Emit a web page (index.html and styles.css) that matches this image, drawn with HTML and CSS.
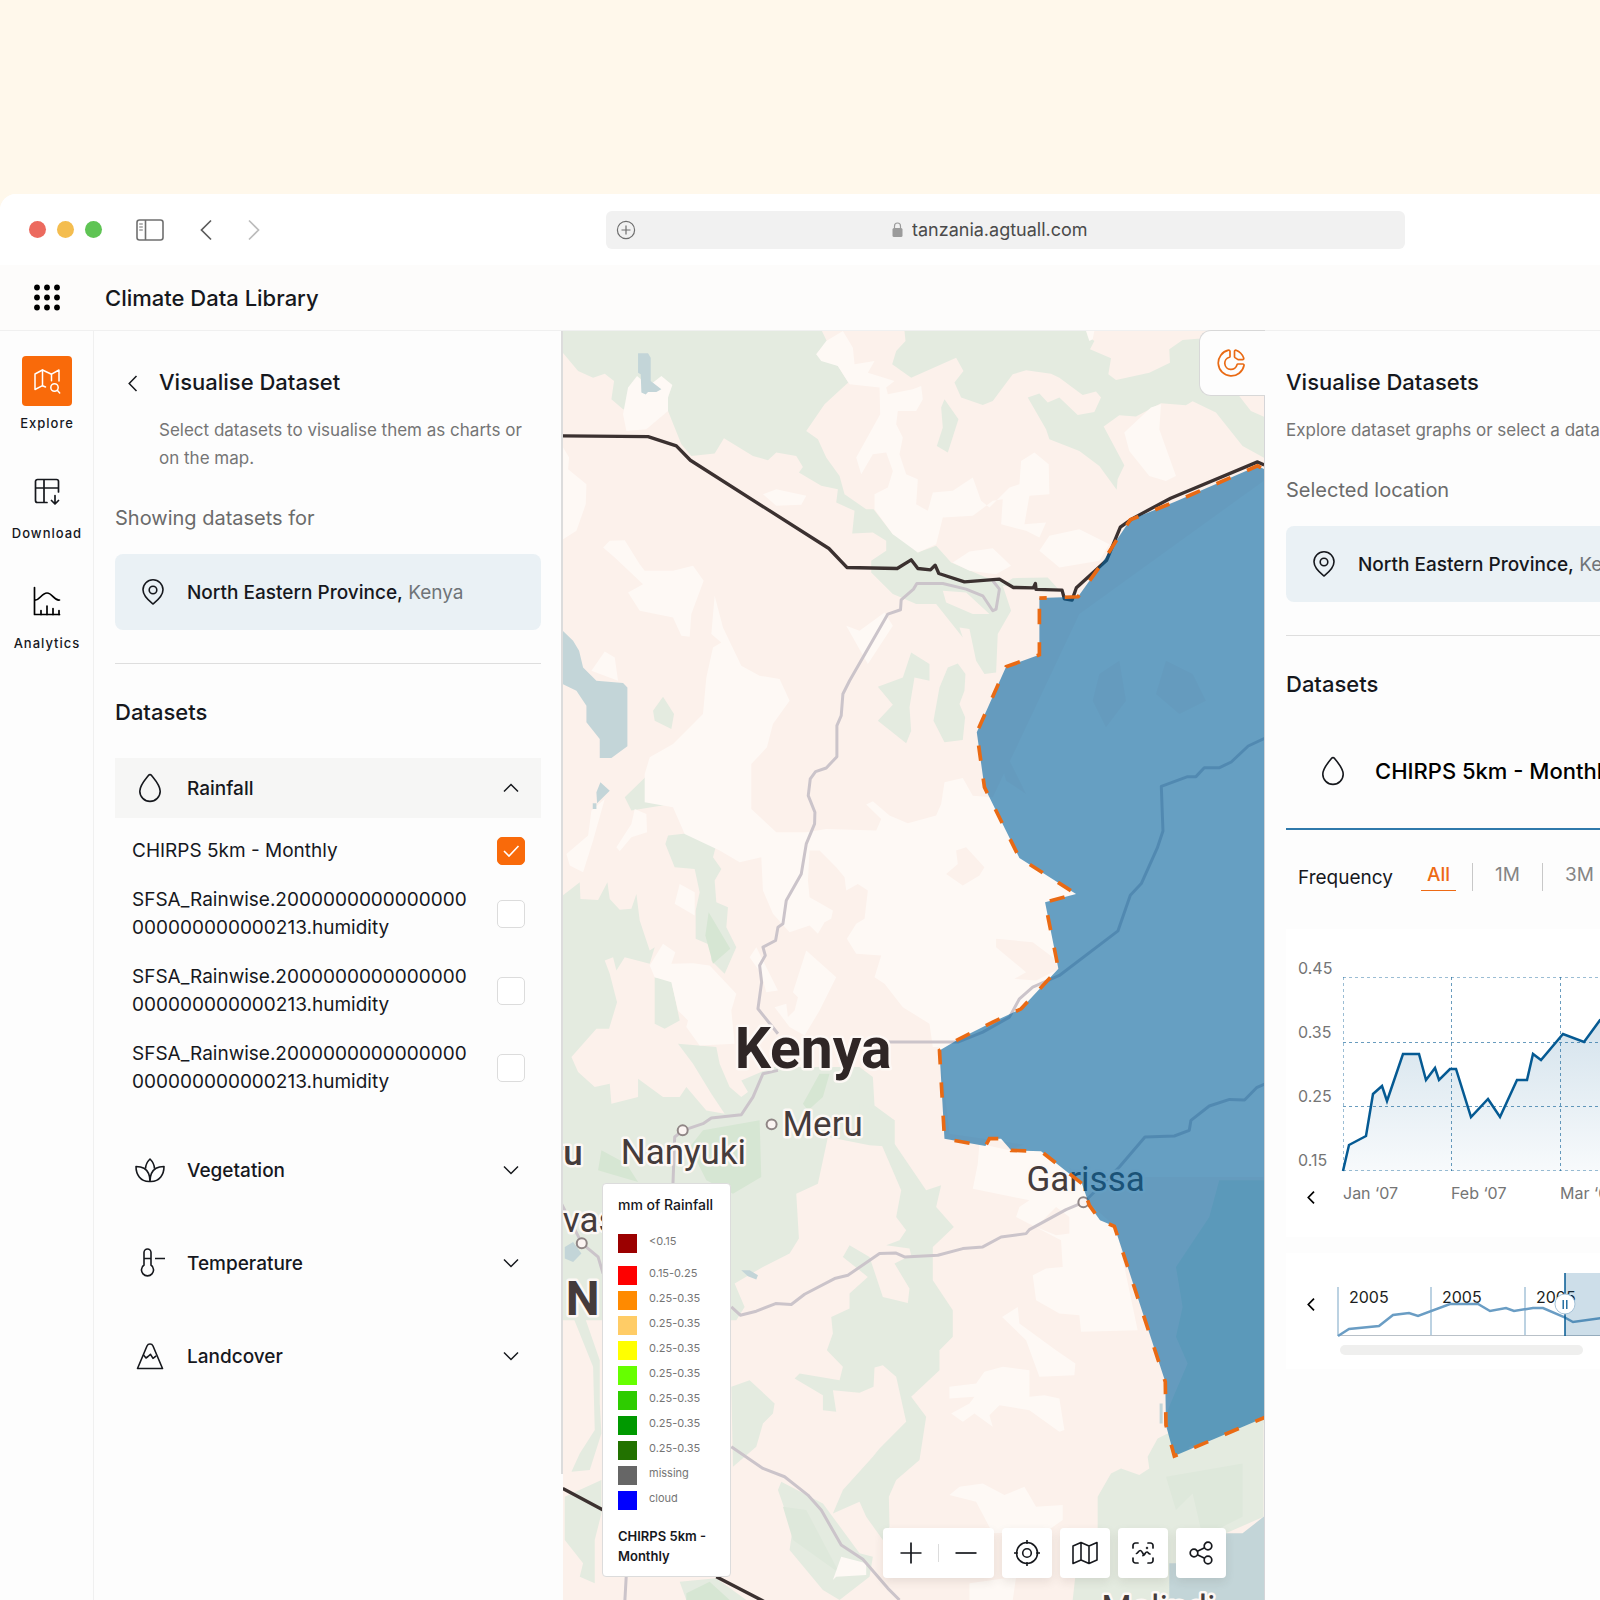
FILE: index.html
```html
<!DOCTYPE html>
<html lang="en">
<head>
<meta charset="utf-8">
<meta name="viewport" content="width=device-width, initial-scale=1">
<title>Climate Data Library</title>
<link rel="stylesheet" href="styles.css">
</head>
<body>
<div class="window">
  <div class="chrome">
    <div class="chrome-left">
      <div class="lights"><span class="light red"></span><span class="light amber"></span><span class="light green"></span></div>
      <button class="icon-btn sidebar-btn" aria-label="Toggle sidebar">
        <svg width="28" height="22" viewBox="0 0 28 22" fill="none" stroke="#6f6f6f" stroke-width="1.6"><rect x="1" y="1" width="26" height="20" rx="2.5"/><path d="M9.5 1v20"/><path d="M3.2 5h3.6M3.2 8h3.6M3.2 11h3.6" stroke-width="1.1"/></svg>
      </button>
      <button class="icon-btn" aria-label="Back">
        <svg width="12" height="22" viewBox="0 0 12 22" fill="none" stroke="#5c5c5c" stroke-width="1.7"><path d="M11 1.500 1.500 11 11 20.500"/></svg>
      </button>
      <button class="icon-btn forward-btn" aria-label="Forward">
        <svg width="12" height="22" viewBox="0 0 12 22" fill="none" stroke="#bcbcbc" stroke-width="1.7"><path d="M1 1.500 10.500 11 1 20.500"/></svg>
      </button>
    </div>
    <div class="address">
      <button class="icon-btn add-btn" aria-label="Add bookmark">
        <svg width="20" height="20" viewBox="0 0 20 20" fill="none" stroke="#6f6f6f" stroke-width="1.2"><circle cx="10" cy="10" r="8.600"/><path d="M10 5.500v9M5.500 10h9"/></svg>
      </button>
      <label class="url">
        <svg width="11" height="15" viewBox="0 0 11 15" aria-hidden="true"><rect x=".5" y="6" width="10" height="9" rx="1.500" fill="#9b9b9b"/><path d="M2.500 6.500V4a3 3 0 0 1 6 0v2.500" fill="none" stroke="#9b9b9b" stroke-width="1.200"/></svg>
        <input type="text" aria-label="Address" value="tanzania.agtuall.com">
      </label>
    </div>
  </div>

  <header class="app-header">
    <button class="icon-btn apps-btn" aria-label="Apps">
      <svg width="26" height="27" viewBox="0 0 26 27" fill="#000"><circle cx="3" cy="3.500" r="2.900"/><circle cx="13" cy="3.500" r="2.900"/><circle cx="23" cy="3.500" r="2.900"/><circle cx="3" cy="13.500" r="2.900"/><circle cx="13" cy="13.500" r="2.900"/><circle cx="23" cy="13.500" r="2.900"/><circle cx="3" cy="23.500" r="2.900"/><circle cx="13" cy="23.500" r="2.900"/><circle cx="23" cy="23.500" r="2.900"/></svg>
    </button>
    <h1>Climate Data Library</h1>
  </header>

  <div class="app">
    <nav class="rail">
      <a href="#explore" class="rail-item active">
        <span class="rail-icon"><svg width="28" height="28" viewBox="0 0 28 28" fill="none" stroke="#fff" stroke-width="1.500" stroke-linejoin="round" stroke-linecap="round"><path d="M12.500 20 9.500 18.700 2 22.500V7L9.500 3l9 4.200L26 3v11"/><path d="M9.500 3v15.500M18.500 7.200v6.500"/><circle cx="21.500" cy="20.500" r="3.700"/><path d="m24.300 23.300 2.400 2.600"/></svg></span>
        Explore
      </a>
      <a href="#download" class="rail-item">
        <span class="rail-icon"><svg width="28" height="28" viewBox="0 0 28 28" fill="none" stroke="#16181d" stroke-width="1.700" stroke-linejoin="round" stroke-linecap="round"><path d="M14 25.500H4.500a2 2 0 0 1-2-2v-19a2 2 0 0 1 2-2h19a2 2 0 0 1 2 2V15M2.500 11h23M11 2.500v23"/><path d="M22 18.500v8M18.500 23.500l3.500 3.500 3.500-3.500"/></svg></span>
        Download
      </a>
      <a href="#analytics" class="rail-item">
        <span class="rail-icon"><svg width="30" height="30" viewBox="0 0 30 30" fill="none" stroke="#000" stroke-width="1.700" stroke-linejoin="round" stroke-linecap="round"><path d="M2.500 1.500v27h25M2.500 14c5 1 7-7 12.500-7s7 8 12.500 7"/><path d="M9 24.500v4M15 20v8.500M21 22.500v6M27 24.500v4"/></svg></span>
        Analytics
      </a>
    </nav>

    <section class="panel panel-left">
      <div class="panel-head">
        <button class="icon-btn back-btn" aria-label="Back to datasets"><svg width="10" height="17" viewBox="0 0 10 17" fill="none" stroke="#16181d" stroke-width="1.500"><path d="M8.500 1 1.200 8.500 8.500 16"/></svg></button>
        <div>
          <h2>Visualise Dataset</h2>
          <p class="lead">Select datasets to visualise them as charts or on the map.</p>
        </div>
      </div>
      <p class="caption">Showing datasets for</p>
      <div class="place">
        <svg class="pin" width="22" height="26" viewBox="0 0 22 26" fill="none" stroke="#16181d" stroke-width="1.600"><path d="M11 25C8.500 23 1 17.500 1 10.800a10 10 0 0 1 20 0C21 17.500 13.500 23 11 25Z"/><circle cx="11" cy="11" r="3.800"/></svg>
        <p><strong>North Eastern Province,</strong> Kenya</p>
      </div>
      <hr>
      <h2 class="sub">Datasets</h2>

      <button class="group open" aria-expanded="true">
        <svg class="group-icon" width="30" height="30" viewBox="0 0 30 30" fill="none" stroke="#16181d" stroke-width="1.600"><path d="M13.600 2.300C10 6.800 4.800 12.300 4.800 18.200a10.200 10.200 0 0 0 20.400 0c0-5.900-5.200-11.400-8.800-15.900a1.800 1.800 0 0 0-2.800 0Z"/></svg>
        <span>Rainfall</span>
        <svg width="16" height="10" viewBox="0 0 16 10" fill="none" stroke="#16181d" stroke-width="1.500"><path d="M1 8.500 8 1.500l7 7"/></svg>
      </button>
      <div class="options">
        <label class="option single"><span>CHIRPS 5km - Monthly</span><input type="checkbox" checked></label>
        <label class="option"><span>SFSA_Rainwise.2000000000000000 000000000000213.humidity</span><input type="checkbox"></label>
        <label class="option"><span>SFSA_Rainwise.2000000000000000 000000000000213.humidity</span><input type="checkbox"></label>
        <label class="option"><span>SFSA_Rainwise.2000000000000000 000000000000213.humidity</span><input type="checkbox"></label>
      </div>
      <div class="groups">
        <button class="group" aria-expanded="false">
          <svg class="group-icon" width="30" height="30" viewBox="0 0 30 30" fill="none" stroke="#16181d" stroke-width="1.600" stroke-linejoin="round"><path d="M15 26.500C5 27 1 19 1 11.500c3 0 5.500.3 8 1.800 4.500 2.700 6 7.200 6 13.200ZM15 26.500c10 .5 14-7.500 14-15-3 0-5.500.3-8 1.800-4.500 2.700-6 7.200-6 13.200Z"/><path d="M10.500 13.800C10.500 10 12.500 6.500 15 4c2.500 2.500 4.500 6 4.500 9.800"/></svg>
          <span>Vegetation</span>
          <svg width="16" height="10" viewBox="0 0 16 10" fill="none" stroke="#16181d" stroke-width="1.500"><path d="m1 1.500 7 7 7-7"/></svg>
        </button>
        <button class="group" aria-expanded="false">
          <svg class="group-icon" width="30" height="30" viewBox="0 0 30 30" fill="none" stroke="#16181d" stroke-width="1.600"><path d="M9 17V4.500a3.500 3.500 0 0 1 7 0V17a6 6 0 1 1-7 0ZM9 10.500h7M20 10.500h10"/></svg>
          <span>Temperature</span>
          <svg width="16" height="10" viewBox="0 0 16 10" fill="none" stroke="#16181d" stroke-width="1.500"><path d="m1 1.500 7 7 7-7"/></svg>
        </button>
        <button class="group" aria-expanded="false">
          <svg class="group-icon" width="30" height="30" viewBox="0 0 30 30" fill="none" stroke="#16181d" stroke-width="1.600" stroke-linejoin="round"><path d="M12 5a3.300 3.300 0 0 1 6 0l9.500 22.500h-25L12 5Z"/><path d="m8.500 14 2.500 3 2-1.500 2.500-2.200 2.500 4 3.200-2.500"/></svg>
          <span>Landcover</span>
          <svg width="16" height="10" viewBox="0 0 16 10" fill="none" stroke="#16181d" stroke-width="1.500"><path d="m1 1.500 7 7 7-7"/></svg>
        </button>
      </div>
    </section>

    <main class="map">
      <svg class="map-art" viewBox="563 330 702 1270" preserveAspectRatio="xMidYMin slice" role="img" aria-label="Map of Kenya">
        <g transform="translate(560 180) scale(.33333)">
          <g fill="#e4ebe0">
            <path d="M9 450H787L803 483 770 520 835 555 866 605 795 670 740 750 775 775 800 830 840 885 855 940 920 985H942L1000 1060 1040 1080 1075 1115 1130 1095 1175 1145 1280 1190 1340 1205 1360 1192 1465 1190 1500 1228 1430 1226 1330 1215 1355 1290 1315 1360 1310 1475 1275 1480 1250 1440 1230 1345 1200 1340 1210 1370 1170 1320 1130 1270H1070L1025 1250 1000 1240 935 1175V1140L980 1110V1080L940 1055 878 1058 885 990 830 965 835 925 785 915 718 875 730 858 710 825 650 815 625 838 580 825 493 772 465 818 395 825 365 790 325 690 190 685 155 655 163 600 135 578 100 590 55 570 9 515Z"/>
            <path d="M1035 450 1038 480 1010 510 998 550 1055 590 1190 530 1212 570 1185 605 1205 650 1270 672 1300 660 1360 580 1400 568 1475 578 1500 590 1570 642 1610 632 1625 650 1605 693 1555 702 1500 650 1465 665 1440 638 1405 650 1460 745 1470 775 1560 810 1620 855 1672 927 1675 895 1695 853 1633 737 1680 703 1730 707 1805 667 1880 673 1900 661 1970 695 2050 795 2140 845V475L1915 473 1870 477 1830 505 1832 545 1770 575 1670 597 1647 580 1655 532 1592 505 1605 480 1585 465 1590 450Z"/>
            <path d="M1155 655 1197 715 1165 815 1132 795 1150 740 1145 680Z"/>
            <path d="M1055 1415 1110 1450V1500L1065 1490 1050 1580 1055 1650 1040 1688 955 1620 1000 1572 955 1518 1030 1490ZM1165 1460 1195 1448 1218 1480 1215 1530 1200 1570 1217 1610 1210 1678 1155 1685 1122 1620 1140 1520Z"/>
            <path d="M195 1850 260 1787 290 1805 330 1793 348 1830 335 1870 215 1890ZM280 1590 310 1548 343 1600 335 1645 285 1620Z"/>
            <path d="M325 1965 385 1958 468 2000 460 2030 485 2065 465 2100 470 2165 505 2180 500 2240 530 2300 495 2380 455 2340V2295L408 2275V2190L420 2135 405 2065 345 2060 317 1990Z"/>
            <path d="M9 2145 60 2105 62 2155 115 2158 143 2105 150 2155 180 2188 215 2185 230 2140 240 2220 270 2310 285 2300 270 2350 195 2330 170 2370 160 2330 135 2340 150 2380 172 2465 148 2545H110L35 2630 55 2675 105 2720 150 2710 155 2770 235 2750V2695L310 2750H360L380 2720 440 2790 495 2800 455 2740 400 2650 355 2590 470 2600 480 2650 510 2720 545 2750 565 2735 545 2700 640 2660 900 2660 940 2690 945 2775 1005 2820V2900L930 2895 805 2870 775 3010 710 3040 718 3175 690 3220 610 3260 525 3310 555 3380 530 3420H9Z"/>
            <path d="M285 2390 335 2400 360 2520 315 2545 285 2530Z"/>
            <path d="M40 3410H75L120 3540V3670L125 3760 90 3870 35 3875 60 3820 105 3750 100 3560ZM15 3950 125 3900V4000L105 4080V4210L60 4190 70 4150 15 4080ZM515 3620 570 3600 645 3670 640 3700 610 3730 590 3800 520 3860ZM655 3930 665 3905 790 3970 900 4120 940 4130 930 4190 840 4260 790 4230 690 4110 700 4040 680 4000ZM360 4205 470 4195 560 4260H380Z"/>
            <path transform="translate(900 2820)" d="M0-50 105 0V70L200 210 245 195 230 260 283 320 220 380V480L280 570V650L240 690V750L155 830 200 890 180 1020 110 1080 88 1130 90 1220 70 1260 20 1190 0 1145-80 1180-50 1110 40 1010 60 985 140 905 110 770 70 735 45 742 42 800 0 818-80 810-70 875-110 870V825L-195 775-180 760-60 780-50 740-98 690-80 640-85 590-30 565V520L25 470-50 410-30 375 30 410 70 530 145 548 150 505 105 430 155 405 150 385 80 375 120 360 140 330 110 290 125 210 65 70 0 30Z"/>
            <path transform="translate(900 2820)" d="M925 940 1000 990 1213 880V1190L1100 1240 1095 1330 930 1440H640L650 1350 715 1230V1130L755 1060 785 1045 840 1065 870 1045 865 1010 895 955Z"/>
            <path transform="translate(900 2820)" d="M1080 180 1240 180V900L930 1000 925 870 985 730 950 650 970 560 950 440 1050 290Z"/>
          </g>
          <g fill="#d6e6d3">
            <path d="M447 2195 512 2305 460 2350 437 2265ZM730 2770 780 2680H810L790 2750 745 2790ZM115 2970 125 2910 200 2950 235 3005 150 2980ZM390 2900 430 2850 600 2820 605 2990 520 3040 440 3000ZM380 4240 450 4205 510 4260H380Z"/>
            <path d="M1820 3890 2050 3850 2050 4010 1930 4070 1900 3940 1850 3990ZM670 3980 740 3990 840 4180 700 4080Z" fill="#dee8db"/>
          </g>
          <g fill="#fef9f5">
            <path d="M850 450 800 480 770 520 785 540 835 555 870 610 960 620 962 700 890 830 905 880 940 820 980 815 1000 870 985 920 945 940V985L1000 1060 1075 1115 1130 1090 1150 1010 1240 1005 1300 960 1330 955 1325 1030 1400 1050 1440 1070 1460 1025 1395 1030 1410 945 1470 940 1468 850 1425 815 1385 840 1380 910 1350 920 1290 980 1265 960 1240 890 1180 930 1120 935 1105 990 1070 970 1075 895 1040 880 1020 820 1030 770 1010 730 1015 690 1070 690 1090 655 1085 615 1060 625 985 640 980 620 1005 600 925 575 945 540 885 550 880 500Z"/>
            <path d="M232 585 205 620 190 700 200 750 260 745 325 690V650L338 612 305 585 280 605 262 610Z"/>
            <path d="M10 800 28 830 25 865 80 910 78 970 50 1050 10 1075ZM610 940 650 925 740 945 725 972 650 975ZM130 1100 150 1080 195 1078 240 1150 255 1170H340L400 1155 432 1200 395 1300 390 1368 365 1365 340 1310 240 1290 205 1235 250 1210 165 1130ZM135 1412 165 1430 175 1500 95 1470Z"/>
            <path d="M1180 1145 1230 1112 1300 1102 1355 1155 1310 1180 1230 1170ZM1440 1110 1470 1065 1560 1045 1650 1090 1620 1140 1500 1160ZM860 1335 900 1350 975 1295 1000 1335 925 1450ZM1695 755 1775 680 1805 670 1800 745 1850 885 1820 900 1770 885 1710 810ZM1580 450H1605L1600 475 1590 480Z"/>
            <path d="M465 1245 490 1340 545 1455 600 1485 660 1495 690 1560 640 1630 622 1700 575 1750V1885L650 1955H740L800 1945 950 1950 965 1915 920 1872 940 1862 990 1905 1045 1928 1130 1905 1145 1870 1155 1805 1210 1792 1240 1845 1300 1850 1560 1300 2113 900V2990H1570L1440 2900 1170 2860 1140 2600 1120 2600 1110 2530 1030 2480 975 2410 945 2390 965 2325 890 2320 862 2275 890 2230 915 2215 925 2130 895 2110 860 2130 855 2090 830 2060 780 2010H750L745 2100 750 2150 820 2190 815 2215 795 2225 775 2260 750 2235 690 2255 640 2200 610 2130 605 2030 540 2045 480 2010 375 1960 340 1880 255 1865V1780L270 1730 340 1690 430 1600 440 1490 460 1400 485 1385 455 1360Z"/>
            <path d="M740 2310 830 2390 780 2490 735 2565 690 2540 645 2480 680 2470 685 2510 705 2490 715 2450 700 2435ZM570 2330 590 2300 620 2360 655 2430 620 2435 605 2380ZM270 2355 310 2290 347 2315 335 2350 400 2348 450 2355 530 2440 515 2490 525 2590 420 2595 380 2540 385 2520 355 2490 335 2405 285 2390ZM360 2110 405 2135V2205L345 2170ZM135 1855 95 1890 85 1965 20 2020 30 2055 70 2075 100 1980ZM225 1885 260 1900 262 1955 215 1970 180 2012 170 2000 215 1930Z"/>
            <path transform="translate(900 2820)" d="M360 70 450 90 550 50 670 190 690 250 770 320 835 630 665 635 660 585 600 580 530 540 520 465 560 445 610 440 605 360 470 290 480 260 510 240 340 205 355 130ZM475 560 480 610 590 690 648 730 645 765 540 770 520 715 500 660 428 590ZM270 800 350 790 375 755 430 740 510 750V830L555 825 600 835 615 930 600 935 510 870 420 855 390 885 400 920 345 880 310 905 275 880 330 850 345 830 270 835ZM270 1125 300 1100 370 1090 435 1125 495 1100 530 1160 610 1155V1200L560 1235 400 1240 350 1145ZM330 1390 470 1370 460 1440H330ZM-80 1380-55 1310 20 1330V1365L-70 1370Z" />
          </g>
          <g fill="#fcf1eb">
            <path d="M1190 2010 1220 2000 1275 2060 1260 2085 1210 2115 1160 2080 1195 2050ZM1310 2275 1420 2285 1480 2330 1500 2365 1430 2400 1365 2395 1400 2375 1310 2300ZM1430 3140 1490 3080 1530 3110V3160L1490 3165ZM1150 1230 1220 1235 1290 1300 1240 1300 1160 1265ZM2040 645 2075 690 2120 710V645ZM1620 1480 1680 1440 1700 1560 1640 1640 1600 1560ZM1820 1440 1900 1480 1940 1560 1860 1600 1790 1540ZM1330 1700 1290 1620 1340 1800 1400 1840Z"/>
          </g>
          <g fill="#c3d5d8">
            <path d="M235 517H265L273 530V600L305 625 290 633H265L258 641 245 635 243 580 235 575ZM9 1350 40 1380 58 1410 70 1460 110 1500 190 1507 203 1520V1697L155 1732H120V1675L80 1625V1575L50 1530 9 1510ZM122 1805 150 1830 112 1868 110 1835ZM99 1868H110V1885H99ZM15 3200 40 3185 65 3220 40 3245 15 3235ZM545 3270H570L595 3285 590 3298 565 3288ZM1801 3670H1810V3730H1801Z"/>
            <path d="M2113 4010 2050 4060 2000 4060 1990 4150 1830 4150V4260H2130V4010Z"/>
          </g>
          <g fill="none" stroke="#cbc4ca" stroke-width="9" stroke-linejoin="round">
            <path d="M1300 1200 1320 1225 1310 1285 1300 1290 1270 1245 1220 1225 1150 1208H1072L1062 1225 1025 1257 1023 1287 985 1300 870 1500 850 1540 845 1605 832 1635V1728L800 1762 768 1773 752 1795 746 1845 766 1895 765 1930 740 1990 725 2080 680 2160 670 2230 655 2240 648 2280 610 2300 617 2325 600 2355 606 2405 595 2485 655 2560"/>
            <path d="M655 2670 610 2680 580 2750 545 2803 455 2813 430 2830 370 2850 345 2870 338 3060"/>
            <path d="M900 2585H1195L1270 2555 1350 2510 1380 2455 1420 2420 1500 2385 1676 2251 1713 2144 1746 2109 1794 2002 1811 1951 1806 1817 1885 1788H1910L1935 1761H1981L2016 1744 2067 1696 2127 1668"/>
            <path d="M515 3380 542 3405 590 3393 648 3370 695 3373 735 3342 825 3295 865 3285 960 3220 1008 3218 1035 3230 1135 3225 1210 3205 1270 3200 1325 3170 1400 3160 1410 3148 1520 3088 1575 3065 1680 2960 1757 2870 1845 2867 1890 2850 1895 2820 1950 2777 2011 2757 2056 2759 2092 2722 2127 2706"/>
            <path d="M515 3800 610 3865 675 3890 745 3945 785 3990 845 4095 910 4138 985 4225 1020 4260M200 4180 195 4270M5 3070 67 3190 115 3230 130 3280"/>
          </g>
          <path fill="none" stroke="#3b3130" stroke-width="10" stroke-linejoin="round" d="M9 765 265 767 350 795 392 838 808 1103 862 1160 1013 1163 1055 1137 1075 1163 1113 1167 1127 1153 1138 1178 1215 1203 1320 1195 1362 1220 1422 1221 1428 1208 1430 1226 1508 1228 1515 1254 1538 1258 1551 1221 1642 1138 1683 1039 1718 1014 1834 952 2095 843 2115 852M9 3925 130 3990M470 4190 620 4268"/>
        </g>
        <g fill="#fbf4f2" stroke="#8f8585" stroke-width="2"><circle cx="683" cy="1130" r="5"/><circle cx="772" cy="1124" r="5"/><circle cx="582" cy="1243" r="5"/><circle cx="1084" cy="1202" r="5"/></g>
        <g class="places">
          <text class="country" x="735" y="1068">Kenya</text>
          <text x="783" y="1136">Meru</text>
          <text x="621" y="1164">Nanyuki</text>
          <text x="1027" y="1191">Garissa</text>
          <text x="1102" y="1620">Malindi</text>
          <text x="563" y="1232">vas</text>
          <text class="town" x="583" y="1165" text-anchor="end">ru</text>
          <text class="city" x="566" y="1315">N</text>
        </g>
        <path transform="translate(560 180) scale(.33333)" fill="#0062a0" fill-opacity=".6" d="M1440 1252 1556 1248 1627 1149 1673 1076 1713 1017 1849 962 2095 855 2125 870V3708L1845 3828 1820 3735 1818 3605 1665 3138 1622 3120 1590 3075 1568 3010 1445 2913 1355 2910 1325 2875H1290L1278 2897 1155 2875 1140 2610 1200 2575 1300 2525 1385 2485 1497 2365 1457 2165 1550 2140 1380 2032 1275 1820 1252 1655 1340 1458 1440 1422Z"/>
        <path transform="translate(560 180) scale(.33333)" fill="none" stroke="#e96a14" stroke-width="11" stroke-dasharray="46 54" stroke-dashoffset="24" d="M1440 1252 1556 1248 1627 1149 1673 1076 1713 1017 1849 962 2095 855 2125 870V3708L1845 3828 1820 3735 1818 3605 1665 3138 1622 3120 1590 3075 1568 3010 1445 2913 1355 2910 1325 2875H1290L1278 2897 1155 2875 1140 2610 1200 2575 1300 2525 1385 2485 1497 2365 1457 2165 1550 2140 1380 2032 1275 1820 1252 1655 1340 1458 1440 1422Z"/>
      </svg>

      <button class="chart-tab" aria-label="Charts">
        <svg width="28" height="28" viewBox="0 0 28 28" fill="none" stroke="#e96a14" stroke-width="1.700" stroke-linejoin="round"><path d="M13 2.300a1.200 1.200 0 0 0-1.500-1.100A13 13 0 1 0 27 16.500a1.200 1.200 0 0 0-1.200-1.500h-4.900a1 1 0 0 0-.9.700 6.200 6.200 0 1 1-7.600-7.500.9.900 0 0 0 .6-.9Z"/><path d="M17.500 2.500a1.200 1.200 0 0 1 1.600-1.200 13 13 0 0 1 7.600 7.700 1.200 1.200 0 0 1-1.200 1.600h-4.500l-3-2a1.300 1.300 0 0 1-.5-1Z"/></svg>
      </button>

      <div class="legend">
        <h3>mm of Rainfall</h3>
        <ul>
          <li><span class="swatch s1"></span>&lt;0.15</li>
          <li><span class="swatch s2"></span>0.15-0.25</li>
          <li><span class="swatch s3"></span>0.25-0.35</li>
          <li><span class="swatch s4"></span>0.25-0.35</li>
          <li><span class="swatch s5"></span>0.25-0.35</li>
          <li><span class="swatch s6"></span>0.25-0.35</li>
          <li><span class="swatch s7"></span>0.25-0.35</li>
          <li><span class="swatch s8"></span>0.25-0.35</li>
          <li><span class="swatch s9"></span>0.25-0.35</li>
          <li><span class="swatch s10"></span>missing</li>
          <li><span class="swatch s11"></span>cloud</li>
        </ul>
        <h3 class="legend-source">CHIRPS 5km - Monthly</h3>
      </div>

      <div class="tools">
        <div class="tool zoom">
          <button aria-label="Zoom in"><svg width="22" height="22" viewBox="0 0 22 22" stroke="#16181d" stroke-width="1.700"><path d="M11 .5v21M.5 11h21"/></svg></button>
          <span class="bar"></span>
          <button aria-label="Zoom out"><svg width="22" height="22" viewBox="0 0 22 22" stroke="#16181d" stroke-width="1.700"><path d="M.5 11h21"/></svg></button>
        </div>
        <button class="tool" aria-label="Locate"><svg width="26" height="26" viewBox="0 0 26 26" fill="none" stroke="#16181d" stroke-width="1.600"><circle cx="13" cy="13" r="10.500"/><circle cx="13" cy="13" r="4.300"/><path d="M13 0v4M13 22v4M0 13h4M22 13h4"/></svg></button>
        <button class="tool" aria-label="Base map"><svg width="26" height="24" viewBox="0 0 26 24" fill="none" stroke="#16181d" stroke-width="1.600" stroke-linejoin="round"><path d="M1 5 9 1.500l8 3.500 8-3.500V19l-8 3.500L9 19l-8 3.500ZM9 1.500V19M17 5v17.500"/></svg></button>
        <button class="tool" aria-label="Capture"><svg width="22" height="22" viewBox="0 0 22 22" fill="none" stroke="#16181d" stroke-width="1.700" stroke-linecap="round"><path d="M1 6V3.500A2.500 2.500 0 0 1 3.500 1H6M16 1h2.500A2.500 2.500 0 0 1 21 3.500V6M21 16v2.500a2.500 2.500 0 0 1-2.500 2.500H16M6 21H3.500A2.500 2.500 0 0 1 1 18.500V16"/><path d="M4.500 11.500c1.500 0 2-3 3.800-3s2.200 3 3.700 4.500c1-.5 1.200-3 3-3 1.300 0 1.500 2 3 2M11 13.500l1-.5"/><circle cx="15" cy="6" r=".4"/></svg></button>
        <button class="tool" aria-label="Share"><svg width="24" height="24" viewBox="0 0 24 24" fill="none" stroke="#16181d" stroke-width="1.700"><circle cx="5" cy="12" r="3.800"/><circle cx="19" cy="5" r="3.800"/><circle cx="19" cy="19" r="3.800"/><path d="M8.400 10.300 15.600 6.700M8.400 13.700l7.200 3.600"/></svg></button>
      </div>
    </main>

    <section class="panel panel-right">
      <h2>Visualise Datasets</h2>
      <p class="lead one-line">Explore dataset graphs or select a dataset</p>
      <p class="caption">Selected location</p>
      <div class="place">
        <svg class="pin" width="22" height="26" viewBox="0 0 22 26" fill="none" stroke="#16181d" stroke-width="1.600"><path d="M11 25C8.500 23 1 17.500 1 10.800a10 10 0 0 1 20 0C21 17.500 13.500 23 11 25Z"/><circle cx="11" cy="11" r="3.800"/></svg>
        <p><strong>North Eastern Province,</strong> Kenya</p>
      </div>
      <hr>
      <h2 class="sub">Datasets</h2>
      <div class="dataset">
        <svg width="30" height="30" viewBox="0 0 30 30" fill="none" stroke="#16181d" stroke-width="1.600"><path d="M13.600 2.300C10 6.800 4.800 12.300 4.800 18.200a10.200 10.200 0 0 0 20.400 0c0-5.900-5.200-11.400-8.800-15.900a1.800 1.800 0 0 0-2.800 0Z"/></svg>
        <span>CHIRPS 5km - Monthly</span>
      </div>
      <div class="frequency">
        <span class="frequency-label">Frequency</span>
        <button class="freq on">All</button><span class="split"></span>
        <button class="freq">1M</button><span class="split"></span>
        <button class="freq">3M</button>
      </div>

      <div class="card chart">
        <div class="y-axis">
          <span>0.45</span><span>0.35</span><span>0.25</span><span>0.15</span>
          <button class="icon-btn prev" aria-label="Earlier months"><svg width="8" height="13" viewBox="0 0 8 13" fill="none" stroke="#000" stroke-width="1.700"><path d="M7 .7 1.300 6.500 7 12.300"/></svg></button>
        </div>
        <svg class="plot" width="440" height="253" viewBox="0 0 440 253" role="img" aria-label="Monthly rainfall chart">
          <defs><linearGradient id="fade" x1="0" y1="0" x2="0" y2="1"><stop offset="0" stop-color="#055a93" stop-opacity=".2"/><stop offset="1" stop-color="#055a93" stop-opacity=".03"/></linearGradient></defs>
          <path fill="url(#fade)" d="m0 215 6-26 17-9 7-42 9-8 5 15 16-47h16l7 26 9-12 4 12 11-11h6l15 48 17-18 12 18 17-37h10l6-26 8 6 22-26 21 8 16-22 90-30 80 20V215Z"/>
          <path fill="none" stroke="#055a93" stroke-opacity=".6" stroke-dasharray="3 3" d="M0 86.500h440M0 150.500h440"/>
          <path fill="none" stroke="#055a93" stroke-opacity=".4" stroke-dasharray="3 3" d="M0 21.500h440M0 214.500h440M.5 21v194"/>
          <path fill="none" stroke="#055a93" stroke-opacity=".6" stroke-dasharray="3 3" d="M108.500 21v194M217.500 21v194M325.500 21v194"/>
          <path fill="none" stroke="#055a93" stroke-width="2.500" d="m0 215 6-26 17-9 7-42 9-8 5 15 16-47h16l7 26 9-12 4 12 11-11h6l15 48 17-18 12 18 17-37h10l6-26 8 6 22-26 21 8 16-22 90-30 80 20"/>
          <g class="axis-text"><text x="0" y="243">Jan ‘07</text><text x="108" y="243">Feb ‘07</text><text x="217" y="243">Mar ‘07</text></g>
        </svg>
      </div>

      <div class="card overview">
        <button class="icon-btn prev" aria-label="Earlier years"><svg width="8" height="13" viewBox="0 0 8 13" fill="none" stroke="#000" stroke-width="1.700"><path d="M7 .7 1.300 6.500 7 12.300"/></svg></button>
        <div class="overview-body">
          <svg class="plot" width="440" height="64" viewBox="0 0 440 64" role="img" aria-label="Yearly overview">
            <path stroke="#a6c3d9" stroke-width="1.500" d="M0 14v49M93 14v49M187 14v49"/>
            <path stroke="#b9c1c8" d="M0 62.500h440"/>
            <g class="year-text"><text x="11" y="30">2005</text><text x="104" y="30">2005</text><text x="198" y="30">2005</text></g>
            <path fill="none" stroke="#6a9dc4" stroke-width="2.500" d="m0 63 11-7 30-3 14-11 16-2 9 3 32-12h28l12 7 16-3 8 3 19-3h10l21 9 9 5 28-4 80-12 60 8"/>
            <path fill="#055a93" fill-opacity=".2" d="M227 0h213v63H227Z"/>
            <path stroke="#055a93" stroke-width="1.500" d="M227 0v63"/>
            <circle cx="227" cy="31" r="10" fill="#fff" stroke="#a6c3d9"/>
            <path stroke="#055a93" stroke-width="1.300" d="M225.200 27v9M228.800 27v9"/>
          </svg>
          <div class="track"></div>
        </div>
      </div>
    </section>
  </div>
</div>
</body>
</html>
```
FILE: styles.css
```css
* { box-sizing: border-box; }

body {
  margin: 0;
  min-height: 100vh;
  padding-top: 194px;
  display: flex;
  flex-direction: column;
  overflow-x: hidden;
  background: #fff8eb;
  color: #16181d;
  font-family: Inter, "Liberation Sans", sans-serif;
}

h1, h2, h3, p, ul { margin: 0; padding: 0; font-weight: 400; }
h1, h2 { font-size: 22px; line-height: 28px; font-weight: 500; }
ul { list-style: none; }
button { margin: 0; padding: 0; border: 0; background: none; color: inherit; font: inherit; cursor: pointer; }
svg { display: block; flex: none; }

.window {
  flex: 1;
  display: flex;
  flex-direction: column;
  background: #fdfdfd;
  border-top-left-radius: 16px;
  overflow: hidden;
}

/* browser bar */
.chrome {
  display: grid;
  grid-template-columns: 606px 1fr 195px;
  align-items: center;
  height: 71px;
  background: #fff;
}
.chrome-left { display: flex; align-items: center; padding-left: 29px; }
.lights { display: flex; gap: 11px; }
.light { width: 17px; height: 17px; border-radius: 50%; }
.red { background: #ec6a5e; }
.amber { background: #f4bd4f; }
.green { background: #5fc454; }
.sidebar-btn { margin: 0 36px 0 34px; }
.forward-btn { margin-left: 36px; }
.address {
  display: flex;
  align-items: center;
  height: 38px;
  padding: 0 10px;
  border-radius: 6px;
  background: #f1f1f1;
}
.url { flex: 1; display: flex; align-items: center; justify-content: center; gap: 9px; margin-right: 50px; }
.url input {
  width: 177px;
  padding: 0;
  border: 0;
  background: none;
  color: #4a4a4a;
  font: 18px/24px Inter, "Liberation Sans", sans-serif;
}

.app-header {
  display: flex;
  align-items: center;
  gap: 45px;
  height: 66px;
  padding-left: 34px;
  background: #fdfcfb;
  border-bottom: 1px solid #f0f0f0;
}

.app {
  flex: 1;
  display: grid;
  grid-template-columns: 94px 469px 1fr 335px;
}

/* navigation rail */
.rail {
  display: flex;
  flex-direction: column;
  align-items: center;
  gap: 33px;
  padding: 25px 0 0 1px;
  border-right: 1px solid #f0f0f0;
}
.rail-item {
  display: flex;
  flex-direction: column;
  align-items: center;
  gap: 7px;
  color: #16181d;
  font-size: 13px;
  line-height: 20px;
  font-weight: 500;
  letter-spacing: 1px;
  text-decoration: none;
}
.rail-icon { display: grid; place-items: center; width: 50px; height: 50px; border-radius: 4px; }
.active .rail-icon { background: #f96a0a; }

/* panels */
.panel-left {
  align-self: start;
  padding: 37px 20px 88px 21px;
  border-right: 2px solid #dcdcdc;
}
.panel-head { display: grid; grid-template-columns: 44px 1fr; }
.back-btn { justify-self: start; align-self: start; margin: 7px 0 0 13px; }
.lead { margin-top: 20px; color: #757575; font-size: 17px; line-height: 28px; }
.one-line { white-space: nowrap; }
.caption { margin-top: 32px; color: #6b6b6b; font-size: 20px; line-height: 28px; }
.place {
  display: flex;
  align-items: center;
  gap: 23px;
  height: 76px;
  margin-top: 22px;
  padding-left: 27px;
  border-radius: 8px;
  background: #eaf1f5;
  color: #6f7478;
  font-size: 19px;
  white-space: nowrap;
}
.place strong { color: #16181d; font-weight: 500; }
hr { height: 1px; margin: 33px 0 0; border: 0; background: #dedede; }
.sub { margin-top: 34px; }

.group {
  display: flex;
  align-items: center;
  width: 100%;
  height: 60px;
  padding: 0 22px 0 20px;
  text-align: left;
  font-size: 19px;
  font-weight: 500;
}
.group span { flex: 1; margin-left: 22px; }
.group.open { margin-top: 32px; background: #f6f6f5; }
.groups { display: flex; flex-direction: column; gap: 33px; margin-top: 44px; }

.options { display: flex; flex-direction: column; gap: 21px; padding: 19px 16px 0 17px; }
.option {
  display: flex;
  align-items: center;
  justify-content: space-between;
  font-size: 19px;
  line-height: 28px;
}
.option span { width: 345px; }
.option input {
  appearance: none;
  width: 28px;
  height: 28px;
  margin: 0;
  border: 1px solid #dcdcdc;
  border-radius: 5px;
  background: #fff;
}
.option input:checked {
  border-color: #f96a0a;
  background: #f96a0a url("data:image/svg+xml,%3Csvg xmlns='http://www.w3.org/2000/svg' viewBox='0 0 26 26' fill='none' stroke='%23fff' stroke-width='1.600'%3E%3Cpath d='m6 13 5 5L20.500 8'/%3E%3C/svg%3E");
}

/* map */
.map { position: relative; background: #fcf1eb; border-right: 1px solid #d5d5d8; }
.map-art { position: absolute; inset: 0; width: 100%; height: 100%; }
.places { font-family: Roboto, sans-serif; font-size: 35px; fill: #453b3b; stroke: #fdf8f5; stroke-width: 5px; stroke-linejoin: round; paint-order: stroke; }
.country { font-size: 57px; font-weight: 700; fill: #2f2626; }
.town { font-weight: 500; }
.city { font-size: 48px; font-weight: 700; }

.chart-tab {
  position: absolute;
  top: -1px;
  right: -1px;
  display: grid;
  place-items: center;
  width: 66px;
  height: 66px;
  padding-right: 3px;
  border: 1px solid #d8d8d8;
  border-right: 0;
  border-radius: 12px 0 0 12px;
  background: #fdfdfd;
}

.legend {
  position: absolute;
  left: 39px;
  bottom: 23px;
  width: 129px;
  padding: 11px 10px 10px 15px;
  border: 1px solid #dcdcdc;
  border-radius: 4px;
  background: #fff;
}
.legend h3 { font-size: 14px; line-height: 20px; font-weight: 500; }
.legend .legend-source { font-size: 13px; font-weight: 600; }
.legend ul { display: flex; flex-direction: column; gap: 5px; margin: 19px 0 15px; }
.legend li { display: flex; gap: 12px; height: 20px; color: #757575; font-size: 11px; line-height: 15px; }
.legend li:first-child { margin-bottom: 7px; }
.swatch { width: 19px; height: 19px; }
.s1 { background: #9b0000; }
.s2 { background: #fe0000; }
.s3 { background: #ff8a00; }
.s4 { background: #ffcc66; }
.s5 { background: #ffff00; }
.s6 { background: #66ff00; }
.s7 { background: #2ecc00; }
.s8 { background: #009900; }
.s9 { background: #227200; }
.s10 { background: #666666; }
.s11 { background: #0000ff; }

.tools { position: absolute; right: 38px; bottom: 22px; display: flex; gap: 8px; }
.tool {
  display: grid;
  place-items: center;
  width: 50px;
  height: 50px;
  border-radius: 4px;
  background: #fff;
  box-shadow: 0 4px 10px rgba(60, 50, 40, .1);
}
.zoom { display: flex; justify-content: space-between; width: 111px; padding: 0 17px; }
.bar { width: 1px; height: 18px; background: #dcdcdc; }

.panel-right { padding: 37px 0 0 21px; overflow: hidden; }
.panel-right .place { margin-right: -20px; }
.dataset {
  display: flex;
  align-items: center;
  gap: 27px;
  height: 116px;
  margin-top: 16px;
  padding-left: 32px;
  border-bottom: 2px solid #2f79ab;
  color: #000;
  font-size: 22px;
  font-weight: 500;
  white-space: nowrap;
}
.frequency { display: flex; align-items: center; gap: 16px; height: 94px; margin-bottom: 5px; padding-left: 12px; font-size: 19px; white-space: nowrap; }
.frequency-label { width: 107px; flex: none; }
.freq { height: 28px; padding: 0 6px 4px; color: #858585; line-height: 22px; border-bottom: 1px solid transparent; }
.freq.on { color: #ee6a14; border-color: #ee6a14; font-weight: 500; }
.split { width: 1px; height: 28px; background: #c8c8c8; }

.card { display: flex; background: #fff; }
.plot { overflow: visible; }
.chart { padding: 27px 0 28px 12px; }
.y-axis { flex: none; display: flex; flex-direction: column; gap: 40px; width: 45px; color: #757575; font-size: 16px; line-height: 24px; }
.prev { flex: none; display: grid; place-items: center; width: 26px; height: 24px; }
.y-axis .prev { margin-top: -27px; }
.axis-text { font-size: 16px; fill: #757575; }
.overview { margin-top: 16px; padding: 20px 0 14px 12px; }
.overview .prev { margin: 19px 14px 0 0; }
.year-text { font-size: 16px; fill: #1b1d20; }
.track { width: 243px; height: 10px; margin: 8px 0 0 2px; border-radius: 5px; background: #efefee; }
```
